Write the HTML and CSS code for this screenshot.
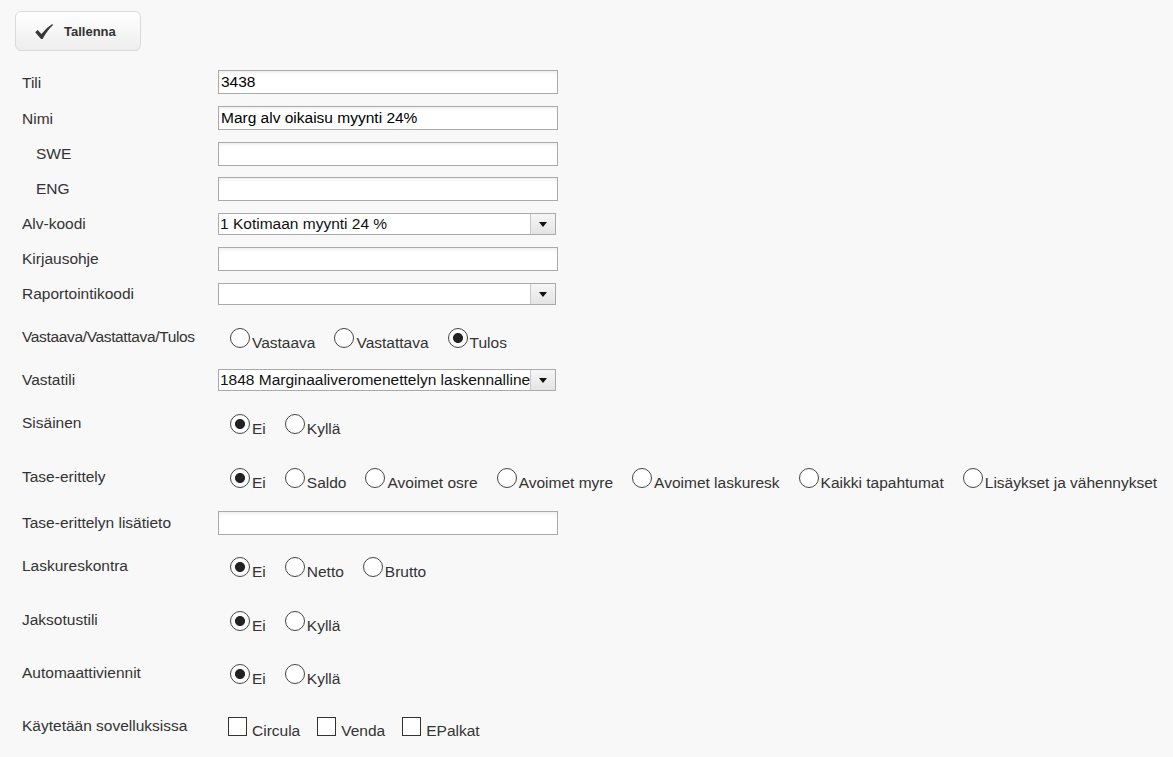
FILE: index.html
```html
<!DOCTYPE html>
<html lang="fi">
<head>
<meta charset="utf-8">
<title>Tili</title>
<link rel="stylesheet" href="styles.css">
</head>
<body>
<div class="page">
  <div class="toolbar">
    <button class="btn" type="button">
      <svg class="btn-icon" width="18" height="15" viewBox="0 0 18 15" aria-hidden="true">
        <path d="M0.2 8.3 L2.7 6.1 L6.4 10 Q11 4 17.3 0.1 L18 0.9 Q12.3 6.2 7.6 14.9 L6 14.9 Z" fill="#383838"/>
      </svg>
      <span>Tallenna</span>
    </button>
  </div>

  <form class="form">
    <div class="row row-36"><label class="lbl">Tili</label><input class="txt" type="text" value="3438"></div>
    <div class="row row-36"><label class="lbl">Nimi</label><input class="txt" type="text" value="Marg alv oikaisu myynti 24%"></div>
    <div class="row"><label class="lbl sub">SWE</label><input class="txt" type="text" value=""></div>
    <div class="row"><label class="lbl sub">ENG</label><input class="txt" type="text" value=""></div>
    <div class="row"><label class="lbl">Alv-koodi</label>
      <div class="sel"><span class="val">1 Kotimaan myynti 24 %</span><span class="arr"><span class="tri"></span></span></div>
    </div>
    <div class="row"><label class="lbl">Kirjausohje</label><input class="txt" type="text" value=""></div>
    <div class="row"><label class="lbl">Raportointikoodi</label>
      <div class="sel"><span class="val"></span><span class="arr"><span class="tri"></span></span></div>
    </div>

    <div class="row opt-row opt-row-short"><label class="lbl lbl-tight">Vastaava/Vastattava/Tulos</label>
      <div class="opts">
        <label class="opt"><span class="radio"></span>Vastaava</label>
        <label class="opt"><span class="radio"></span>Vastattava</label>
        <label class="opt"><span class="radio on"></span>Tulos</label>
      </div>
    </div>

    <div class="row"><label class="lbl">Vastatili</label>
      <div class="sel"><span class="val">1848 Marginaaliveromenettelyn laskennalline</span><span class="arr"><span class="tri"></span></span></div>
    </div>

    <div class="row opt-row"><label class="lbl">Sisäinen</label>
      <div class="opts">
        <label class="opt"><span class="radio on"></span>Ei</label>
        <label class="opt"><span class="radio"></span>Kyllä</label>
      </div>
    </div>

    <div class="row opt-row"><label class="lbl">Tase-erittely</label>
      <div class="opts">
        <label class="opt"><span class="radio on"></span>Ei</label>
        <label class="opt"><span class="radio"></span>Saldo</label>
        <label class="opt"><span class="radio"></span>Avoimet osre</label>
        <label class="opt"><span class="radio"></span>Avoimet myre</label>
        <label class="opt"><span class="radio"></span>Avoimet laskuresk</label>
        <label class="opt"><span class="radio"></span>Kaikki tapahtumat</label>
        <label class="opt"><span class="radio"></span>Lisäykset ja vähennykset</label>
      </div>
    </div>

    <div class="row"><label class="lbl">Tase-erittelyn lisätieto</label><input class="txt" type="text" value=""></div>

    <div class="row opt-row"><label class="lbl">Laskureskontra</label>
      <div class="opts">
        <label class="opt"><span class="radio on"></span>Ei</label>
        <label class="opt"><span class="radio"></span>Netto</label>
        <label class="opt"><span class="radio"></span>Brutto</label>
      </div>
    </div>

    <div class="row opt-row"><label class="lbl">Jaksotustili</label>
      <div class="opts">
        <label class="opt"><span class="radio on"></span>Ei</label>
        <label class="opt"><span class="radio"></span>Kyllä</label>
      </div>
    </div>

    <div class="row opt-row opt-row-tight"><label class="lbl">Automaattiviennit</label>
      <div class="opts">
        <label class="opt"><span class="radio on"></span>Ei</label>
        <label class="opt"><span class="radio"></span>Kyllä</label>
      </div>
    </div>

    <div class="row opt-row opt-row-tight"><label class="lbl">Käytetään sovelluksissa</label>
      <div class="opts checks">
        <label class="opt"><span class="check"></span>Circula</label>
        <label class="opt"><span class="check"></span>Venda</label>
        <label class="opt"><span class="check"></span>EPalkat</label>
      </div>
    </div>
  </form>
</div>
</body>
</html>
```

FILE: styles.css
```css
html, body {
  margin: 0;
  padding: 0;
  background: #f8f8f8;
}

body {
  font-family: "Liberation Sans", Arial, sans-serif;
  font-size: 15.5px;
  color: #333;
}

.page {
  padding: 11px 0 0 15px;
}

.toolbar {
  height: 40px;
  margin-bottom: 13px;
}

.btn {
  box-sizing: border-box;
  width: 126px;
  height: 40px;
  margin: 0;
  padding: 0 0 0 19px;
  display: flex;
  align-items: center;
  gap: 11px;
  border: 1px solid #dadada;
  border-radius: 6px;
  background: linear-gradient(#ffffff, #ededed);
  font-family: "Liberation Sans", Arial, sans-serif;
  font-size: 13px;
  font-weight: bold;
  color: #333;
  cursor: pointer;
}

.btn-icon {
  display: block;
  margin-top: 1px;
}

.form {
  padding-left: 7px;
}

.row {
  display: flex;
  align-items: center;
  height: 35px;
}

.row-36 {
  height: 36px;
}

.lbl {
  flex: 0 0 196px;
  line-height: 17px;
  color: #333;
  white-space: nowrap;
}

.lbl-tight {
  letter-spacing: -0.35px;
}

.lbl.sub {
  box-sizing: border-box;
  padding-left: 14px;
}

.txt {
  box-sizing: border-box;
  width: 340px;
  height: 24px;
  margin: 0;
  padding: 0 2px;
  border: 1px solid #aaa;
  border-radius: 0;
  background: #fff;
  box-shadow: inset 0 3px 4px -2px rgba(0, 0, 0, 0.09);
  font-family: "Liberation Sans", Arial, sans-serif;
  font-size: 15.5px;
  color: #000;
  outline: none;
}

.sel {
  box-sizing: border-box;
  width: 338px;
  height: 22px;
  display: flex;
  border: 1px solid #aaa;
  background: #fff;
}

.sel .val {
  flex: 1 1 auto;
  min-width: 0;
  overflow: hidden;
  white-space: nowrap;
  padding-left: 1px;
  line-height: 20px;
  color: #111;
}

.sel .arr {
  flex: 0 0 24px;
  display: flex;
  align-items: center;
  justify-content: center;
  border-left: 1px solid #c8c8c8;
  background: linear-gradient(#f6f6f6, #e4e4e4);
}

.tri {
  width: 0;
  height: 0;
  border-left: 4px solid transparent;
  border-right: 4px solid transparent;
  border-top: 5px solid #111;
  margin-top: 1px;
}

.opt-row {
  box-sizing: border-box;
  align-items: flex-start;
  height: 54px;
  padding-top: 17px;
}

.opt-row-short {
  height: 51px;
}

.opt-row-tight {
  padding-top: 16px;
  height: 53px;
}

.opt-row .lbl {
  padding-top: 0;
}

.opts {
  display: flex;
  gap: 19px;
  margin-left: 12px;
  white-space: nowrap;
}

.opts.checks {
  gap: 17px;
  margin-left: 10px;
}

.opt {
  display: block;
  line-height: 17px;
  color: #333;
}

.radio {
  display: inline-block;
  box-sizing: border-box;
  width: 20px;
  height: 20px;
  margin-right: 2px;
  border: 1px solid #444;
  border-radius: 50%;
  background: #fff;
}

.radio.on {
  background: radial-gradient(circle, #222 0, #222 4.6px, #fff 5.4px);
}

.check {
  display: inline-block;
  box-sizing: border-box;
  width: 19px;
  height: 19px;
  margin-right: 5px;
  border: 1px solid #333;
  background: #fff;
}
```
